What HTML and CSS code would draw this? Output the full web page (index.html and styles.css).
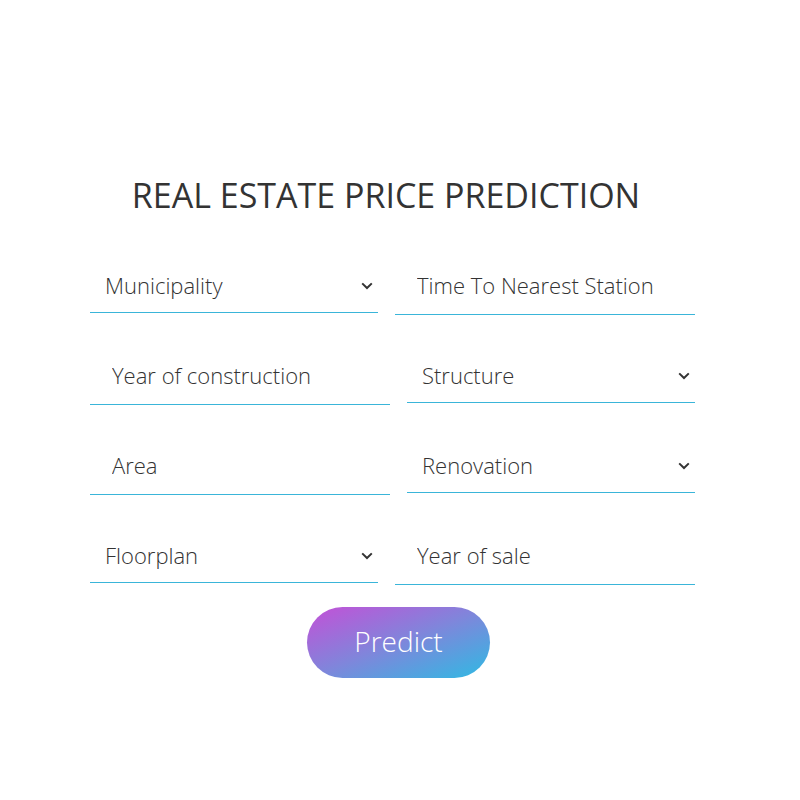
FILE: index.html
```html
<!DOCTYPE html>
<html lang="en">
<head>
<meta charset="utf-8">
<title>Real Estate Price Prediction</title>
<link rel="stylesheet" href="styles.css">
</head>
<body>
<main class="page">
  <h1 class="title">REAL ESTATE PRICE PREDICTION</h1>
  <form class="form">
    <div class="cell cell-left">
      <div class="select-wrap">
        <select class="select"><option>Municipality</option></select>
        <svg class="chev" width="12" height="8" viewBox="0 0 12 8"><path d="M1.2 1.4 L6 6 L10.8 1.4" fill="none" stroke="#333" stroke-width="2"/></svg>
      </div>
    </div>
    <div class="cell"><input class="input" type="text" placeholder="Time To Nearest Station"></div>
    <div class="cell"><input class="input" type="text" placeholder="Year of construction"></div>
    <div class="cell cell-right">
      <div class="select-wrap">
        <select class="select"><option>Structure</option></select>
        <svg class="chev" width="12" height="8" viewBox="0 0 12 8"><path d="M1.2 1.4 L6 6 L10.8 1.4" fill="none" stroke="#333" stroke-width="2"/></svg>
      </div>
    </div>
    <div class="cell"><input class="input" type="text" placeholder="Area"></div>
    <div class="cell cell-right">
      <div class="select-wrap">
        <select class="select"><option>Renovation</option></select>
        <svg class="chev" width="12" height="8" viewBox="0 0 12 8"><path d="M1.2 1.4 L6 6 L10.8 1.4" fill="none" stroke="#333" stroke-width="2"/></svg>
      </div>
    </div>
    <div class="cell cell-left">
      <div class="select-wrap">
        <select class="select"><option>Floorplan</option></select>
        <svg class="chev" width="12" height="8" viewBox="0 0 12 8"><path d="M1.2 1.4 L6 6 L10.8 1.4" fill="none" stroke="#333" stroke-width="2"/></svg>
      </div>
    </div>
    <div class="cell"><input class="input" type="text" placeholder="Year of sale"></div>
  </form>
  <button class="predict" type="button">Predict</button>
</main>
</body>
</html>
```
FILE: styles.css
```css
html, body {
  margin: 0;
  padding: 0;
  background: #ffffff;
}
body {
  font-family: "Open Sans", "Noto Sans", sans-serif;
  color: #333333;
}
.page {
  width: 605px;
  margin-left: 90px;
  padding-top: 171px;
  display: flex;
  flex-direction: column;
}
.title {
  margin: 0;
  font-size: 34px;
  font-weight: 400;
  line-height: 48px;
  text-align: center;
  padding-right: 13px;
  color: #333333;
}
.form {
  margin-top: 46px;
  display: grid;
  grid-template-columns: 300px 300px;
  column-gap: 5px;
  row-gap: 40px;
}
.cell {
  height: 50px;
  display: flex;
  align-items: center;
}
.cell-left { justify-content: flex-start; }
.cell-right { justify-content: flex-end; }
.input {
  box-sizing: border-box;
  width: 300px;
  height: 50px;
  margin: 0;
  border: none;
  border-bottom: 1px solid #3ab5d9;
  outline: none;
  background: transparent;
  padding: 0 22px 10px 22px;
  font-family: inherit;
  font-size: 22px;
  font-weight: 300;
  color: #333333;
}
.input::placeholder {
  color: #333333;
  opacity: 1;
}
.select-wrap {
  position: relative;
  width: 288px;
  height: 46px;
}
.select {
  appearance: none;
  -webkit-appearance: none;
  box-sizing: border-box;
  width: 288px;
  height: 46px;
  margin: 0;
  border: none;
  border-bottom: 1px solid #3ab5d9;
  border-radius: 0;
  outline: none;
  background: transparent;
  padding: 0 30px 10px 15px;
  font-family: inherit;
  font-size: 22px;
  font-weight: 300;
  color: #333333;
}
.chev {
  position: absolute;
  right: 5px;
  top: 15px;
  pointer-events: none;
}
.predict {
  align-self: flex-start;
  margin-top: 22px;
  margin-left: 217px;
  width: 183px;
  height: 71px;
  border: none;
  border-radius: 36px;
  background: linear-gradient(to bottom right, #c450d7 0%, #7f86db 50%, #2fbae3 100%);
  color: #ffffff;
  font-family: inherit;
  font-size: 28px;
  font-weight: 300;
  padding: 0 0 4px 0;
  cursor: pointer;
}
```
